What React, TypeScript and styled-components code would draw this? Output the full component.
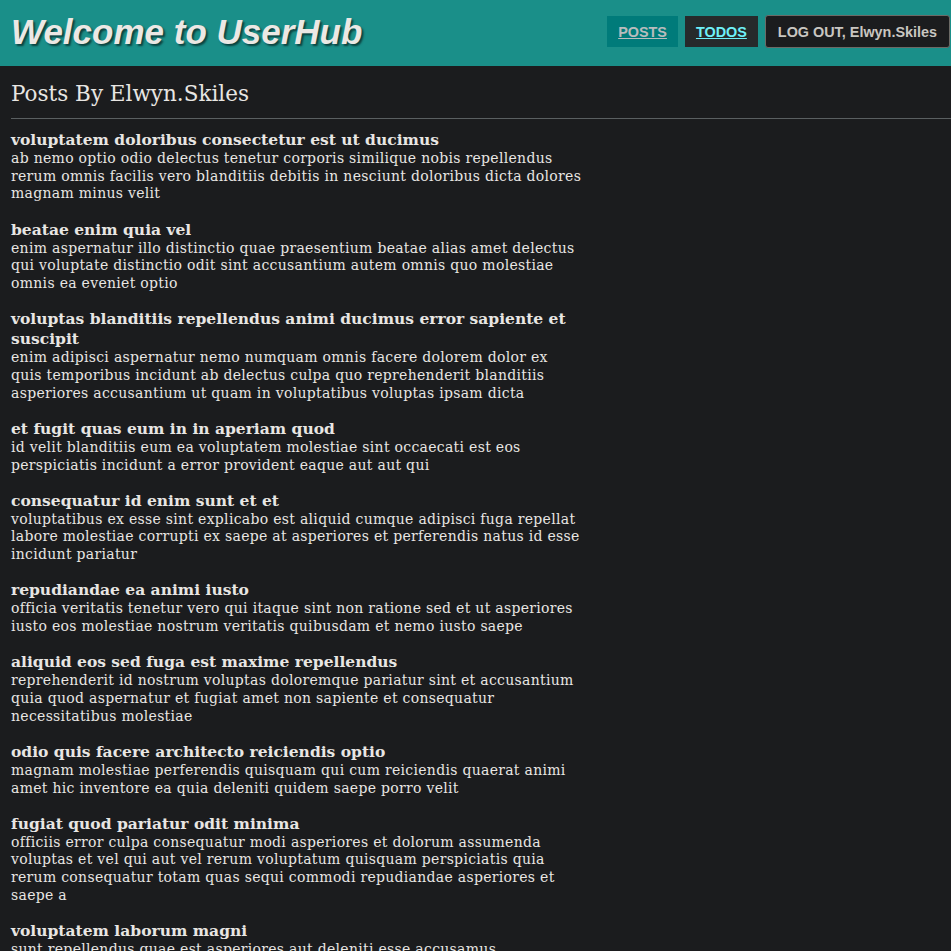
import React from "react";
import styled, { createGlobalStyle } from "styled-components";

const GlobalStyle = createGlobalStyle`
  html, body { margin: 0; padding: 0; background: #1b1c1e; }
  body { font-family: "DejaVu Serif", serif; color: #e8e6e3; overflow: hidden; }
`;

const Page = styled.div`
  min-height: 951px;
  background: #1b1c1e;
`;

const Header = styled.header`
  height: 66px;
  background: #1a8f89;
  display: flex;
  align-items: center;
  justify-content: space-between;
  padding: 0 1px 0 11px;
`;

const Brand = styled.h1`
  margin: 0 0 2px;
  font-family: "Liberation Sans", Arial, sans-serif;
  font-style: italic;
  font-weight: 700;
  font-size: 35px;
  color: #ebe8e4;
  text-shadow: 2px 2px 2px rgba(0, 0, 0, 0.55);
`;

const Nav = styled.nav`
  display: flex;
  align-items: center;
  gap: 7px;
  margin-bottom: 3px;
`;

const NavLink = styled.a<{ $active?: boolean }>`
  display: inline-flex;
  align-items: center;
  height: 31px;
  padding: 0 11px;
  font-family: "Liberation Sans", Arial, sans-serif;
  font-weight: 700;
  font-size: 14.4px;
  text-decoration: underline;
  background: ${(p) => (p.$active ? "#007b7a" : "#262a2b")};
  color: ${(p) => (p.$active ? "#b8bcbd" : "#6ef0f8")};
`;

const LogoutButton = styled.button`
  height: 33px;
  padding: 0 12px;
  font-family: "Liberation Sans", Arial, sans-serif;
  font-weight: 700;
  font-size: 14.4px;
  color: #c9c6c1;
  background: #1b1c1e;
  border: 1px solid #6c6a66;
  border-radius: 3px;
`;

const Main = styled.main`
  padding: 0 0 0 11px;
`;

const PageTitle = styled.h2`
  margin: 0;
  padding: 14px 0 10px;
  font-family: "DejaVu Serif", serif;
  font-weight: 400;
  font-size: 21.5px;
  line-height: 28px;
  color: #e8e6e3;
`;

const Rule = styled.hr`
  margin: 0 0 11px;
  border: 0;
  border-top: 1px solid #5a5f61;
`;

const PostList = styled.ul`
  list-style: none;
  margin: 0;
  padding: 0;
  width: 571px;
  display: flex;
  flex-direction: column;
  gap: 16.5px;
`;

const Post = styled.li``;

const PostTitle = styled.h3`
  margin: 0;
  font-size: 15.5px;
  line-height: 20px;
  font-weight: 700;
  color: #e8e6e3;
`;

const PostBody = styled.p`
  margin: 0;
  font-size: 14px;
  letter-spacing: 0.3px;
  line-height: 17.7px;
  color: #e8e6e3;
`;

const posts = [
  {
    title: "voluptatem doloribus consectetur est ut ducimus",
    body: "ab nemo optio odio delectus tenetur corporis similique nobis repellendus rerum omnis facilis vero blanditiis debitis in nesciunt doloribus dicta dolores magnam minus velit",
  },
  {
    title: "beatae enim quia vel",
    body: "enim aspernatur illo distinctio quae praesentium beatae alias amet delectus qui voluptate distinctio odit sint accusantium autem omnis quo molestiae omnis ea eveniet optio",
  },
  {
    title: "voluptas blanditiis repellendus animi ducimus error sapiente et suscipit",
    body: "enim adipisci aspernatur nemo numquam omnis facere dolorem dolor ex quis temporibus incidunt ab delectus culpa quo reprehenderit blanditiis asperiores accusantium ut quam in voluptatibus voluptas ipsam dicta",
  },
  {
    title: "et fugit quas eum in in aperiam quod",
    body: "id velit blanditiis eum ea voluptatem molestiae sint occaecati est eos perspiciatis incidunt a error provident eaque aut aut qui",
  },
  {
    title: "consequatur id enim sunt et et",
    body: "voluptatibus ex esse sint explicabo est aliquid cumque adipisci fuga repellat labore molestiae corrupti ex saepe at asperiores et perferendis natus id esse incidunt pariatur",
  },
  {
    title: "repudiandae ea animi iusto",
    body: "officia veritatis tenetur vero qui itaque sint non ratione sed et ut asperiores iusto eos molestiae nostrum veritatis quibusdam et nemo iusto saepe",
  },
  {
    title: "aliquid eos sed fuga est maxime repellendus",
    body: "reprehenderit id nostrum voluptas doloremque pariatur sint et accusantium quia quod aspernatur et fugiat amet non sapiente et consequatur necessitatibus molestiae",
  },
  {
    title: "odio quis facere architecto reiciendis optio",
    body: "magnam molestiae perferendis quisquam qui cum reiciendis quaerat animi amet hic inventore ea quia deleniti quidem saepe porro velit",
  },
  {
    title: "fugiat quod pariatur odit minima",
    body: "officiis error culpa consequatur modi asperiores et dolorum assumenda voluptas et vel qui aut vel rerum voluptatum quisquam perspiciatis quia rerum consequatur totam quas sequi commodi repudiandae asperiores et saepe a",
  },
  {
    title: "voluptatem laborum magni",
    body: "sunt repellendus quae est asperiores aut deleniti esse accusamus repellendus quia aut quia dolorem unde eum tempora esse dolore",
  },
];

export default function App() {
  return (
    <Page>
      <GlobalStyle />
      <Header>
        <Brand>Welcome to UserHub</Brand>
        <Nav>
          <NavLink $active href="#posts">POSTS</NavLink>
          <NavLink href="#todos">TODOS</NavLink>
          <LogoutButton>LOG OUT, Elwyn.Skiles</LogoutButton>
        </Nav>
      </Header>
      <Main>
        <PageTitle>Posts By Elwyn.Skiles</PageTitle>
        <Rule />
        <PostList>
          {posts.map((p) => (
            <Post key={p.title}>
              <PostTitle>{p.title}</PostTitle>
              <PostBody>{p.body}</PostBody>
            </Post>
          ))}
        </PostList>
      </Main>
    </Page>
  );
}
